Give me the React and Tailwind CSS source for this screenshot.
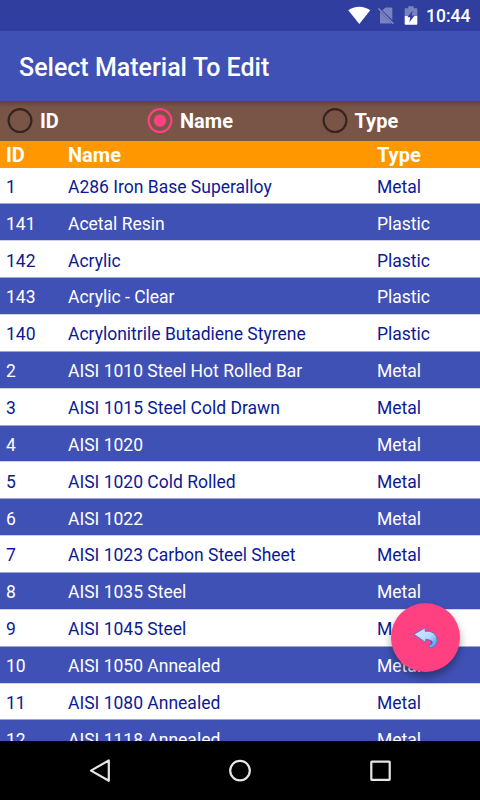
const materials = [
  { id: 1, name: 'A286 Iron Base Superalloy', type: 'Metal' },
  { id: 141, name: 'Acetal Resin', type: 'Plastic' },
  { id: 142, name: 'Acrylic', type: 'Plastic' },
  { id: 143, name: 'Acrylic - Clear', type: 'Plastic' },
  { id: 140, name: 'Acrylonitrile Butadiene Styrene', type: 'Plastic' },
  { id: 2, name: 'AISI 1010 Steel Hot Rolled Bar', type: 'Metal' },
  { id: 3, name: 'AISI 1015 Steel Cold Drawn', type: 'Metal' },
  { id: 4, name: 'AISI 1020', type: 'Metal' },
  { id: 5, name: 'AISI 1020 Cold Rolled', type: 'Metal' },
  { id: 6, name: 'AISI 1022', type: 'Metal' },
  { id: 7, name: 'AISI 1023 Carbon Steel Sheet', type: 'Metal' },
  { id: 8, name: 'AISI 1035 Steel', type: 'Metal' },
  { id: 9, name: 'AISI 1045 Steel', type: 'Metal' },
  { id: 10, name: 'AISI 1050 Annealed', type: 'Metal' },
  { id: 11, name: 'AISI 1080 Annealed', type: 'Metal' },
  { id: 12, name: 'AISI 1118 Annealed', type: 'Metal' },
];

function StatusBar() {
  return (
    <div className="flex h-[31px] shrink-0 items-center bg-[#303f9f] pl-[348px] text-white">
      <svg className="h-[31px] w-[73px] shrink-0" viewBox="348 0 73 31">
        <path d="M348.3 10.3C354.5 5.4 364 5.4 370.2 10.3L359.3 24Z" fill="#fff" />
        <g fill="#fff" opacity="0.35">
          <path d="M385.5 7.5H391.2Q392.3 7.5 392.3 8.7V20L382.2 10.2Z" />
          <path d="M380 11.8L391.8 23.6H381.2Q380 23.6 380 22.4Z" />
        </g>
        <path d="M378.4 8.6L393.4 23.8" stroke="#fff" strokeWidth="1.4" opacity="0.4" />
        <path d="M408.3 6.3H413.7V8.3H417.3V16H404.7V8.3H408.3Z" fill="#fff" opacity="0.35" />
        <path d="M404.7 15.9H417.3V23.8Q417.3 24.8 416.3 24.8H405.7Q404.7 24.8 404.7 23.8Z" fill="#fff" />
        <path d="M412.6 10.5L407.3 17.2H410.2L409.4 22.3L414.6 15.4H411.7Z" fill="#303f9f" />
      </svg>
      <span className="ml-[5px] pt-0.5 text-[17.5px] leading-none font-medium">10:44</span>
    </div>
  );
}

function Radio({ label, checked, className }) {
  return (
    <label className={`flex items-center text-xl leading-6 font-bold text-white ${className}`}>
      <svg className={checked ? 'size-[26px] text-[#ff4081]' : 'size-[26px] text-[#36241f]'} viewBox="0 0 26 26">
        <circle cx="13" cy="12.6" r="11.4" fill="none" stroke="currentColor" strokeWidth="2.2" />
        {checked && <circle cx="13" cy="12.6" r="6.2" fill="currentColor" />}
      </svg>
      <span className="ml-[7px]">{label}</span>
    </label>
  );
}

function MaterialRow({ material, odd }) {
  return (
    <div
      className={`flex h-[36.87px] shrink-0 items-center border-b pt-[3px] pl-1.5 text-[17.5px] ${
        odd ? 'border-[#cfd2e6] bg-[#3f51b5] text-white' : 'border-[#a2a8cc] bg-white text-[#0c1a96]'
      }`}
    >
      <span className="w-[62px]">{material.id}</span>
      <span className="w-[309px]">{material.name}</span>
      <span>{material.type}</span>
    </div>
  );
}

export default function App() {
  return (
    <div className="relative flex h-[800px] w-[480px] flex-col overflow-hidden bg-white font-[Roboto,sans-serif]">
      <StatusBar />
      <header className="flex h-[70px] shrink-0 items-center bg-[#3f51b5] pt-1 pl-[19px]">
        <h1 className="text-[25px] font-medium text-white">Select Material To Edit</h1>
      </header>
      <div className="flex h-[39.5px] shrink-0 items-center bg-[#795548] bg-linear-to-b from-[#5f4338] to-[#795548] to-[6px] pl-[7px]">
        <Radio label="ID" className="w-[140px]" />
        <Radio label="Name" checked className="w-[174.5px]" />
        <Radio label="Type" />
      </div>
      <div className="flex h-[27px] shrink-0 items-center bg-[#ff9800] pt-px pl-1.5 text-xl font-bold text-white">
        <span className="w-[62px]">ID</span>
        <span className="w-[309px]">Name</span>
        <span>Type</span>
      </div>
      <div className="flex min-h-0 flex-1 flex-col overflow-hidden">
        {materials.map((material, i) => (
          <MaterialRow key={material.id} material={material} odd={i % 2 === 1} />
        ))}
      </div>
      <nav className="h-[59px] shrink-0 bg-black">
        <svg className="h-[59px] w-[480px]" viewBox="0 741 480 59" fill="none" stroke="#e6e6e6" strokeWidth="2.2" strokeLinejoin="round">
          <path d="M108.8 760.4V780.8L91 770.6Z" />
          <circle cx="240" cy="770.6" r="9.8" />
          <rect x="371.3" y="761.6" width="18.4" height="18.2" rx="0.5" />
        </svg>
      </nav>
      <button
        aria-label="Back"
        className="absolute top-[603px] left-[391px] flex size-[69px] items-center justify-center rounded-full bg-[#ff4081] shadow-[0_5px_8px_rgba(0,0,0,0.35)]"
      >
        <svg className="h-[24px] w-[26px]" viewBox="0 0 26 24">
          <defs>
            <linearGradient id="arrow" x1="0" y1="0" x2="1" y2="1">
              <stop offset="0" stopColor="#d5eaff" />
              <stop offset="0.55" stopColor="#b5d8ff" />
              <stop offset="1" stopColor="#4c86e6" />
            </linearGradient>
          </defs>
          <path
            d="M1 8.3L12.2 1.8V5.3C18.5 4.6 23.9 7.8 24.1 14C24.2 18.5 21 22 16.6 21.9L15.9 18.9C18.8 18.8 20.4 14.3 12.8 13.2V16.6Z"
            fill="url(#arrow)"
            stroke="#4a72cf"
            strokeWidth="0.9"
            strokeLinejoin="round"
          />
          <path d="M12.8 13.2C20.4 14.3 18.8 18.8 15.9 18.9C20.5 19.5 22.6 13.6 12.8 13.2Z" fill="#3a62c4" />
        </svg>
      </button>
    </div>
  );
}
